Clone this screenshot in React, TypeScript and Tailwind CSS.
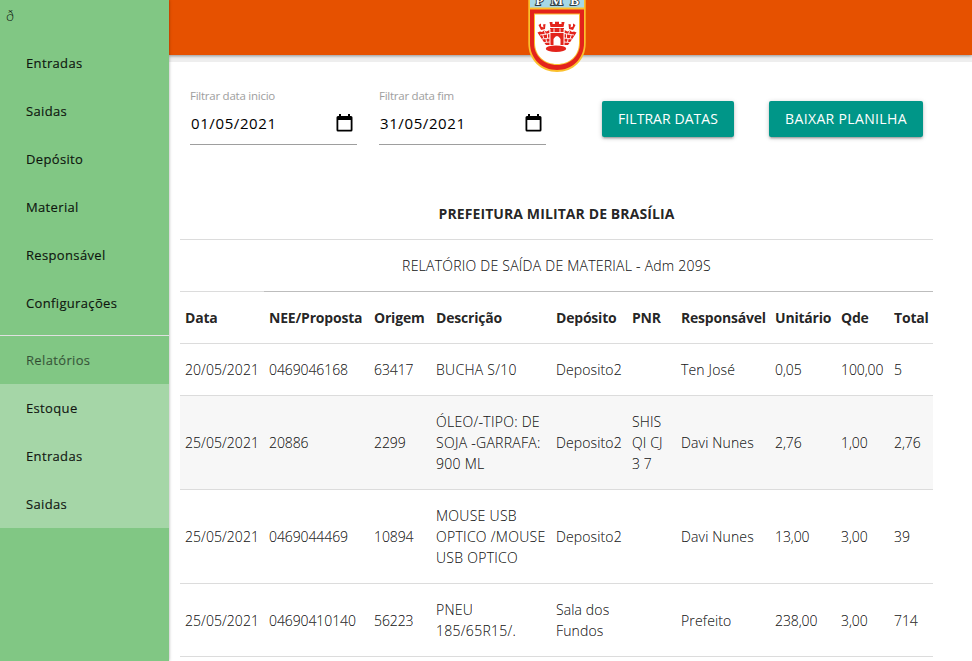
import React from "react";

const menu = ["Entradas", "Saidas", "Depósito", "Material", "Responsável", "Configurações"];
const reports = ["Estoque", "Entradas", "Saidas"];
const columns = ["Data", "NEE/Proposta", "Origem", "Descrição", "Depósito", "PNR", "Responsável", "Unitário", "Qde", "Total"];
const rows: string[][][] = [
  [["20/05/2021"], ["0469046168"], ["63417"], ["BUCHA S/10"], ["Deposito2"], [], ["Ten José"], ["0,05"], ["100,00"], ["5"]],
  [["25/05/2021"], ["20886"], ["2299"], ["ÓLEO/-TIPO: DE", "SOJA -GARRAFA:", "900 ML"], ["Deposito2"], ["SHIS", "QI CJ", "3 7"], ["Davi Nunes"], ["2,76"], ["1,00"], ["2,76"]],
  [["25/05/2021"], ["0469044469"], ["10894"], ["MOUSE USB", "OPTICO /MOUSE", "USB OPTICO"], ["Deposito2"], [], ["Davi Nunes"], ["13,00"], ["3,00"], ["39"]],
  [["25/05/2021"], ["04690410140"], ["56223"], ["PNEU", "185/65R15/."], ["Sala dos", "Fundos"], [], ["Prefeito"], ["238,00"], ["3,00"], ["714"]],
];
// Letter spacing of the body cells, one entry per column
const tracking = [
  "tracking-[0.05px]", "tracking-[-0.1px]", "tracking-[-0.1px]", "tracking-[0.28px]", "tracking-[0.12px]",
  "tracking-[0.1px]", "tracking-[0.15px]", "tracking-[-0.1px]", "tracking-[-0.1px]", "tracking-[-0.1px]",
];
const grid = "grid grid-cols-[84px_105px_62px_120px_76px_49px_94px_66px_53px_44px] items-center border-b border-[#dcdcdc] py-[15px] leading-[21px]";

function Crest() {
  return (
    <svg className="absolute left-[359px] top-0" width="58" height="73" viewBox="0 0 58 73">
      <path d="M.3 0H57.700V43C57.700 60.500 45 72 29 72S.3 60.500 .3 43Z" fill="#fbc02d" />
      <rect x="2" y="0" width="54" height="7.500" fill="#a5d8e6" />
      <path d="M2 9.500H56V43C56 59 44 70 29 70S2 59 2 43Z" fill="#e3231b" />
      <path d="M6 13.500H52V43C52 56 42 65 29 65S6 56 6 43Z" fill="#fbc02d" />
      <path d="M7 14.500H51V43C51 55.500 41.500 64 29 64S7 55.500 7 43Z" fill="#fff" />
      <g fontFamily="Liberation Serif, serif" fontWeight="bold" fontSize="13" fill="#fff" stroke="#2b3a40" strokeWidth="1.800" paintOrder="stroke" textAnchor="middle">
        <text x="11.500" y="5.200">P</text>
        <text x="29" y="5.200">M</text>
        <text x="46.500" y="5.200">B</text>
      </g>
      <g fill="#e3231b">
        <path d="M21.500 22H24.500V24H27V21.700H31V24H33.500V22H36.500L35.500 27H22.500Z" />
        <path d="M10.500 25L13 23.500V26.500L15.500 27.500L15 24.500L17.500 24L17 29L13 30Z" />
        <path d="M47.500 25L45 23.500V26.500L42.500 27.500L43 24.500L40.500 24L41 29L45 30Z" />
        <path d="M9.500 32.500L12 31.500L14 32L16 30.500L18.500 31.500L21.500 30L22 45H18L16.500 43Z" />
        <path d="M48.500 32.500L46 31.500L44 32L42 30.500L39.500 31.500L36.500 30L36 45H40L41.500 43Z" />
        <path d="M22 28H36V45H32.500V39Q29 33 25.500 39V45H22Z" />
        <ellipse cx="28" cy="48.700" rx="10.200" ry="3.300" />
      </g>
      <path d="M12 35L22 33.500M14 39L22 38M16 42.500L22 42M46 35L36 33.500M44 39L36 38M42 42.500L36 42M16.500 31L17.500 34.500M14.800 35L15.800 38.500M19.500 34V38M18 39L18.500 42M41.500 31L40.500 34.500M43.200 35L42.200 38.500M38.500 34V38M40 39L39.500 42M22 29V45M36 29V45M26 28.500V32.500M32 28.500V32.500M22 32.500H36" stroke="#fff" strokeWidth=".9" fill="none" />
    </svg>
  );
}

function CalendarIcon() {
  return (
    <svg width="17" height="18" viewBox="0 0 17 18">
      <path fillRule="evenodd" d="M3 0H5V2H12V0H14V2H15Q16.500 2 16.500 3.500V16Q16.500 17.500 15 17.500H2Q.5 17.500 .5 16V3.500Q.5 2 2 2H3ZM2.300 6V15.700H14.700V6Z" fill="#000" />
    </svg>
  );
}

function DateField({ label, value }: { label: string; value: string }) {
  return (
    <div className="w-[167px] border-b border-[#9e9e9e]">
      <div className="h-4 text-[11.5px] leading-4 tracking-[-0.25px] text-[#9e9e9e]">{label}</div>
      <div className="flex h-[38px] items-center justify-between pl-px pr-1 text-[15px] tracking-[0.6px] text-black">
        <span>{value}</span>
        <CalendarIcon />
      </div>
    </div>
  );
}

function Button({ children, className }: { children: React.ReactNode; className: string }) {
  return (
    <button className={`${className} h-9 whitespace-nowrap rounded-[2px] bg-[#009688] text-[14px] leading-9 text-white shadow-[0_2px_2px_0_rgba(0,0,0,0.14),0_3px_1px_-2px_rgba(0,0,0,0.12),0_1px_5px_0_rgba(0,0,0,0.2)]`}>
      {children}
    </button>
  );
}

export default function App() {
  return (
    <div className="flex h-[661px] w-[972px] overflow-hidden bg-white font-['Open_Sans','Noto_Sans',sans-serif] text-[14px] text-[rgba(0,0,0,0.87)]">
      <aside className="z-10 w-[169px] shrink-0 bg-[#81c784] text-[13px] font-medium tracking-[0.35px] shadow-[0_0_3px_rgba(0,0,0,0.35)] [-webkit-text-stroke:0.2px]">
        <div className="h-[39px] pl-1.5 pt-[5px] text-[14px] font-light leading-[21px] [-webkit-text-stroke:0px]">ð</div>
        {menu.map((m) => (
          <div key={m} className="h-12 pl-[26px] leading-[48px]">{m}</div>
        ))}
        <div className="mt-2 box-content h-12 border-t border-[#e0e0e0] pl-[26px] leading-[48px] text-[rgba(0,0,0,0.54)]">Relatórios</div>
        <div className="bg-[#a5d6a7]">
          {reports.map((m) => (
            <div key={m} className="h-12 pl-[26px] leading-[48px]">{m}</div>
          ))}
        </div>
      </aside>
      <main className="flex-1">
        <div className="h-[62px] bg-[#eeeeee]">
          <header className="relative h-[55px] bg-[#e65100] shadow-[0_1px_3px_rgba(0,0,0,0.4)]">
            <Crest />
          </header>
        </div>
        <div className="flex h-[126px] pl-[21px] pt-[26px]">
          <div className="flex h-[57px] gap-[22px]">
            <DateField label="Filtrar data inicio" value="01/05/2021" />
            <DateField label="Filtrar data fim" value="31/05/2021" />
          </div>
          <div className="ml-14 mt-[13px] flex gap-[35px]">
            <Button className="w-[132px] tracking-[0.06px]">FILTRAR DATAS</Button>
            <Button className="w-[154px] tracking-[0.35px]">BAIXAR PLANILHA</Button>
          </div>
        </div>
        <div className="ml-[11px] w-[753px]">
          <div className="border-b border-[#dcdcdc] py-[15px] text-center font-bold leading-[21px] tracking-[0.1px]">PREFEITURA MILITAR DE BRASÍLIA</div>
          <div className="py-[15px] text-center font-light leading-[21px] tracking-[0.24px] [-webkit-text-stroke:0.15px]">RELATÓRIO DE SAÍDA DE MATERIAL - Adm 209S</div>
          <div className="flex h-px bg-[#dcdcdc]"><div className="ml-[84px] flex-1 bg-[#bdbdbd]" /></div>
          <div className={`${grid} font-bold tracking-[-0.2px]`}>
            {columns.map((c) => <div key={c} className="whitespace-nowrap pl-[5px]">{c}</div>)}
          </div>
          {rows.map((row, i) => (
            <div key={i} className={`${grid} font-light [-webkit-text-stroke:0.15px] ${i === 1 ? "bg-[#f7f7f7]" : ""}`}>
              {row.map((cell, j) => (
                <div key={j} className={`whitespace-nowrap pl-[5px] ${tracking[j]}`}>
                  {cell.map((line) => <div key={line}>{line}</div>)}
                </div>
              ))}
            </div>
          ))}
        </div>
      </main>
    </div>
  );
}
